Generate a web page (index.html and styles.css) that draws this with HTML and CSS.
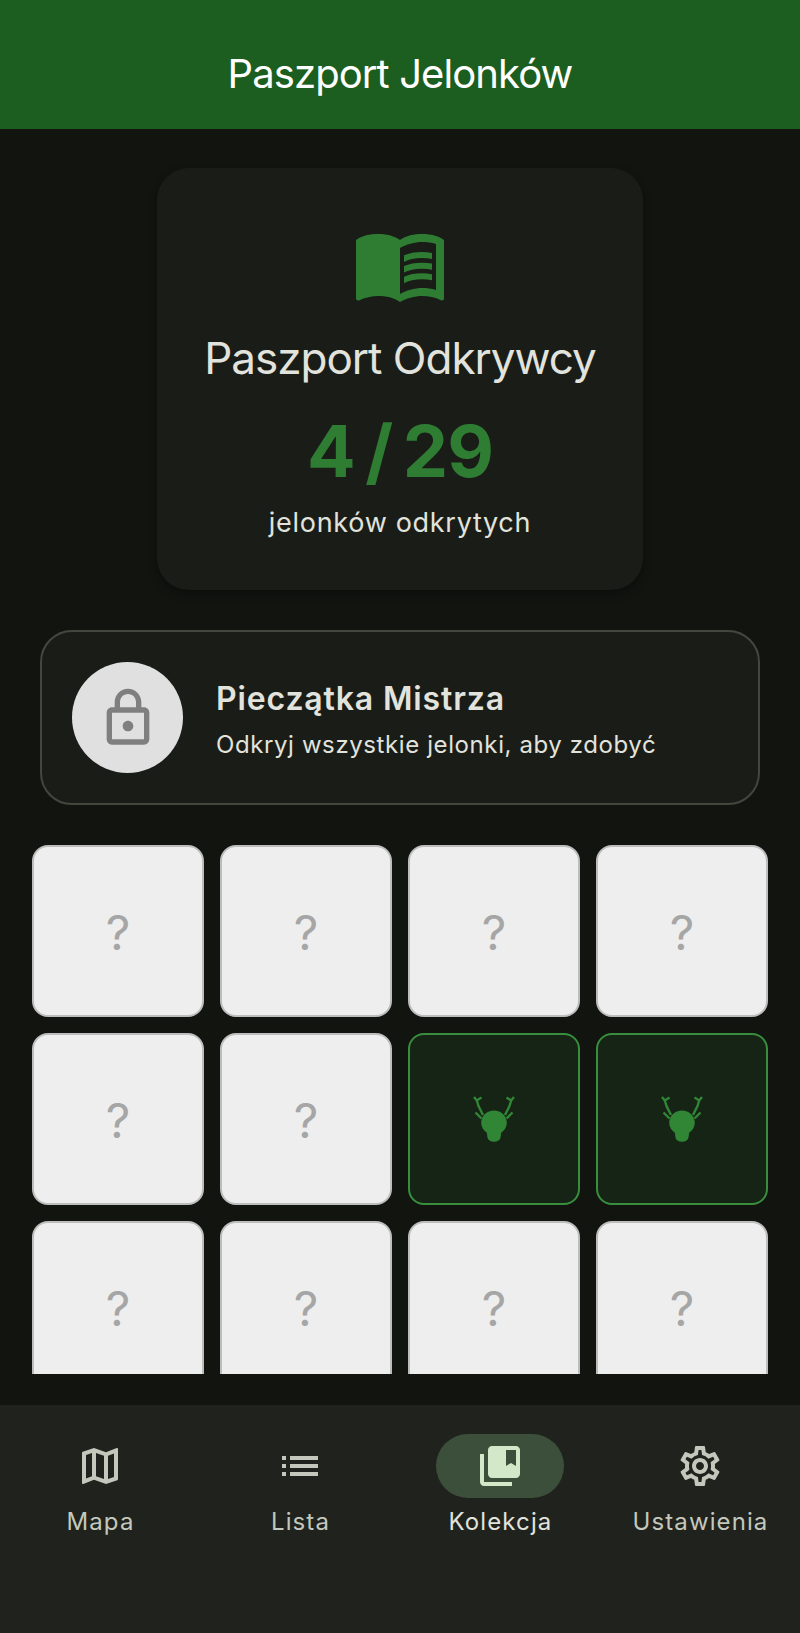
FILE: index.html
```html
<!DOCTYPE html>
<html lang="pl">

<head>
  <meta charset="UTF-8" />
  <title>Paszport Jelonków</title>
  <link rel="stylesheet" href="styles.css">
</head>

<body>
  <svg class="sprite" width="0" height="0">
    <symbol id="deer" viewBox="0 0 48 48">
      <path class="deer-head" d="M24 15.500c7 0 12.800 5.400 12.800 12.200 0 4.300-2.300 7.600-5.500 9.800l-.9 5.500c-.5 2.300-3.300 3.700-6.400 3.700s-5.900-1.400-6.400-3.700l-.9-5.500c-3.200-2.200-5.500-5.500-5.500-9.800 0-6.800 5.800-12.200 12.800-12.200z" />
      <path class="deer-antler" d="M13 20 8.500 11 6.800 5.500M4 2l2.800 3.500L11.500 2.500M5.500 17.500l6 6M35 20l4.500-9 1.700-5.500M44 2l-2.800 3.500L36.500 2.500M42.500 17.500l-6 6" />
    </symbol>
  </svg>

  <header class="app-bar">Paszport Jelonków</header>

  <main class="content">
    <section class="passport-card">
      <svg class="passport-icon" viewBox="0 0 24 24">
        <path d="M21 5c-1.110-.35-2.330-.5-3.500-.5-1.950 0-4.050.4-5.500 1.500-1.450-1.100-3.550-1.500-5.500-1.500S2.450 4.900 1 6v14.650c0 .25.25.5.5.5.1 0 .15-.05.25-.05C3.100 20.450 5.050 20 6.500 20c1.950 0 4.050.4 5.500 1.500 1.350-.85 3.800-1.500 5.500-1.500 1.650 0 3.350.3 4.750 1.050.1.05.15.05.25.05.25 0 .5-.25.5-.5V6c-.6-.45-1.250-.75-2-1zm0 13.500c-1.100-.35-2.300-.5-3.500-.5-1.700 0-4.150.65-5.500 1.500V8c1.350-.85 3.800-1.500 5.500-1.500 1.200 0 2.400.15 3.500.5v11.500z" />
        <path d="M17.500 10.500c.88 0 1.730.09 2.500.26V9.240c-.79-.15-1.640-.24-2.500-.24-1.700 0-3.240.29-4.500.83v1.660c1.130-.64 2.700-.99 4.500-.99zM13 12.490v1.660c1.130-.64 2.700-.99 4.500-.99.88 0 1.730.09 2.500.26V11.900c-.79-.15-1.640-.24-2.500-.24-1.700 0-3.240.3-4.500.83zM17.500 14.330c-1.700 0-3.240.29-4.500.83v1.660c1.130-.64 2.700-.99 4.500-.99.88 0 1.730.09 2.500.26v-1.520c-.79-.16-1.640-.24-2.500-.24z" />
      </svg>
      <h2>Paszport Odkrywcy</h2>
      <div class="count">4 / 29</div>
      <p>jelonków odkrytych</p>
    </section>

    <section class="stamp-card">
      <div class="stamp-circle">
        <svg viewBox="0 0 24 24">
          <path d="M18 8h-1V6c0-2.760-2.240-5-5-5S7 3.240 7 6v2H6c-1.100 0-2 .9-2 2v10c0 1.100.9 2 2 2h12c1.100 0 2-.9 2-2V10c0-1.100-.9-2-2-2zM9 6c0-1.660 1.340-3 3-3s3 1.340 3 3v2H9V6zm9 14H6V10h12v10zm-6-3c1.100 0 2-.9 2-2s-.9-2-2-2-2 .9-2 2 .9 2 2 2z" />
        </svg>
      </div>
      <div>
        <h3>Pieczątka Mistrza</h3>
        <p>Odkryj wszystkie jelonki, aby zdobyć</p>
      </div>
    </section>

    <div class="grid-clip">
      <div class="deer-grid">
        <div class="cell">?</div>
        <div class="cell">?</div>
        <div class="cell">?</div>
        <div class="cell">?</div>
        <div class="cell">?</div>
        <div class="cell">?</div>
        <div class="cell found"><svg><use href="#deer" /></svg></div>
        <div class="cell found"><svg><use href="#deer" /></svg></div>
        <div class="cell">?</div>
        <div class="cell">?</div>
        <div class="cell">?</div>
        <div class="cell">?</div>
      </div>
    </div>
  </main>

  <nav class="bottom-nav">
    <div class="nav-item">
      <span class="nav-icon">
        <svg viewBox="0 0 24 24">
          <path d="M20.500 3l-.16.03L15 5.100 9 3 3.360 4.900c-.21.07-.36.25-.36.48V20.500c0 .28.22.5.5.5l.16-.03L9 18.900l6 2.100 5.640-1.900c.21-.07.36-.25.36-.48V3.500c0-.28-.22-.5-.5-.5zM10 5.470l4 1.400v11.660l-4-1.400V5.470zm-5 .99l3-1.010v11.700l-3 1.160V6.460zm14 11.080l-3 1.010V6.860l3-1.160v11.840z" />
        </svg>
      </span>
      <span class="nav-label">Mapa</span>
    </div>
    <div class="nav-item">
      <span class="nav-icon">
        <svg viewBox="0 0 24 24">
          <path d="M3 13h2v-2H3v2zm0 4h2v-2H3v2zm0-8h2V7H3v2zm4 4h14v-2H7v2zm0 4h14v-2H7v2zM7 7v2h14V7H7z" />
        </svg>
      </span>
      <span class="nav-label">Lista</span>
    </div>
    <div class="nav-item active">
      <span class="nav-icon">
        <svg viewBox="0 0 24 24">
          <path d="M4 6H2v14c0 1.100.9 2 2 2h14v-2H4V6z" />
          <path d="M20 2H8c-1.100 0-2 .9-2 2v12c0 1.100.9 2 2 2h12c1.100 0 2-.9 2-2V4c0-1.100-.9-2-2-2zm0 10l-2.500-1.500L15 12V4h5v8z" />
        </svg>
      </span>
      <span class="nav-label">Kolekcja</span>
    </div>
    <div class="nav-item">
      <span class="nav-icon">
        <svg viewBox="0 0 24 24">
          <path d="M19.430 12.980c.04-.32.07-.64.07-.98 0-.34-.03-.66-.07-.98l2.110-1.650c.19-.15.24-.42.12-.64l-2-3.460c-.09-.16-.26-.25-.44-.25-.06 0-.12.01-.17.03l-2.490 1c-.52-.4-1.080-.73-1.690-.98l-.38-2.650C14.460 2.180 14.250 2 14 2h-4c-.25 0-.46.18-.49.42l-.38 2.650c-.61.25-1.170.59-1.690.98l-2.490-1c-.06-.02-.12-.03-.18-.03-.17 0-.34.09-.43.25l-2 3.460c-.13.22-.07.49.12.64l2.110 1.650c-.04.32-.07.65-.07.98 0 .33.03.66.07.98l-2.110 1.650c-.19.15-.24.42-.12.64l2 3.460c.09.16.26.25.44.25.06 0 .12-.01.17-.03l2.490-1c.52.4 1.080.73 1.690.98l.38 2.650c.03.24.24.42.49.42h4c.25 0 .46-.18.49-.42l.38-2.650c.61-.25 1.170-.59 1.690-.98l2.490 1c.06.02.12.03.18.03.17 0 .34-.09.43-.25l2-3.460c.12-.22.07-.49-.12-.64l-2.110-1.650zm-1.980-1.710c.04.31.05.52.05.73 0 .21-.02.43-.05.73l-.14 1.130.89.7 1.080.84-.7 1.210-1.270-.51-1.040-.42-.9.68c-.43.32-.84.56-1.250.73l-1.060.43-.16 1.130-.2 1.350h-1.400l-.19-1.350-.16-1.130-1.060-.43c-.43-.18-.83-.41-1.230-.71l-.91-.7-1.060.43-1.270.51-.7-1.210 1.080-.84.89-.7-.14-1.130c-.03-.31-.05-.54-.05-.74s.02-.43.05-.73l.14-1.130-.89-.7-1.080-.84.7-1.210 1.270.51 1.040.42.9-.68c.43-.32.84-.56 1.250-.73l1.060-.43.16-1.130.2-1.350h1.390l.19 1.350.16 1.130 1.060.43c.43.18.83.41 1.230.71l.91.7 1.060-.43 1.270-.51.7 1.210-1.070.85-.89.7.14 1.130zM12 8c-2.210 0-4 1.790-4 4s1.790 4 4 4 4-1.790 4-4-1.790-4-4-4zm0 6c-1.100 0-2-.9-2-2s.9-2 2-2 2 .9 2 2-.9 2-2 2z" />
        </svg>
      </span>
      <span class="nav-label">Ustawienia</span>
    </div>
  </nav>
</body>

</html>
```

FILE: styles.css
```css
/* --- BASE --- */
* {
  margin: 0;
  padding: 0;
  box-sizing: border-box;
  font-family: Inter, "Noto Sans", sans-serif;
}

body {
  display: flex;
  flex-direction: column;
  height: 100vh;
  background: #11140f;
  color: #e2e3dd;
  overflow: hidden;
}

.sprite {
  position: absolute;
}

/* --- APP BAR --- */
.app-bar {
  display: flex;
  align-items: center;
  justify-content: center;
  flex: 0 0 129px;
  padding-top: 18px;
  background: #1b5e20;
  color: #fff;
  font-size: 40px;
  letter-spacing: -0.9px;
}

/* --- CONTENT --- */
.content {
  display: flex;
  flex-direction: column;
  align-items: center;
  flex: 1;
  min-height: 0;
  padding-top: 39px;
}

.passport-card {
  display: flex;
  flex-direction: column;
  align-items: center;
  flex: 0 0 auto;
  width: 486px;
  height: 422px;
  padding-top: 48px;
  background: #1a1c18;
  border-radius: 32px;
  box-shadow: 0 4px 10px rgba(0, 0, 0, 0.3);
}

.passport-icon {
  width: 96px;
  height: 96px;
  fill: #2e7d32;
}

.passport-card h2 {
  margin-top: 18px;
  font-size: 44px;
  line-height: 56px;
  font-weight: 400;
  letter-spacing: -1px;
}

.passport-card .count {
  margin-top: 22px;
  font-size: 72px;
  line-height: 86px;
  font-weight: 700;
  letter-spacing: -1px;
  word-spacing: -5.5px;
  color: #2e7d32;
}

.passport-card p {
  margin-top: 9px;
  font-size: 27px;
  line-height: 40px;
  letter-spacing: 0.7px;
}

/* --- STAMP --- */
.stamp-card {
  display: flex;
  align-items: center;
  gap: 33px;
  flex: 0 0 auto;
  width: 720px;
  margin-top: 40px;
  padding: 30px;
  background: #1a1c18;
  border: 2px solid #43483f;
  border-radius: 32px;
}

.stamp-circle {
  display: flex;
  align-items: center;
  justify-content: center;
  width: 111px;
  height: 111px;
  background: #e0e0e0;
  border-radius: 50%;
}

.stamp-circle svg {
  width: 64px;
  height: 64px;
  fill: #7f7f7f;
}

.stamp-card h3 {
  font-size: 32px;
  line-height: 48px;
  font-weight: 600;
  letter-spacing: 0.85px;
}

.stamp-card p {
  margin-top: 6px;
  font-size: 24px;
  line-height: 32px;
  letter-spacing: 0.6px;
}

/* --- GRID --- */
.grid-clip {
  flex: 1;
  min-height: 0;
  align-self: stretch;
  margin: 40px 0 31px;
  overflow: hidden;
}

.deer-grid {
  display: grid;
  grid-template-columns: repeat(4, 1fr);
  gap: 16px;
  padding: 0 32px;
}

.cell {
  display: flex;
  align-items: center;
  justify-content: center;
  aspect-ratio: 1;
  padding-top: 3px;
  background: #eeeeee;
  border: 2px solid #bdbdbd;
  border-radius: 16px;
  color: #a6a6a6;
  font-size: 48px;
}

.cell.found {
  padding-top: 0;
  background: #152415;
  border-color: #388e3c;
}

.cell svg {
  width: 48px;
  height: 48px;
}

.deer-head {
  fill: #318636;
}

.deer-antler {
  fill: none;
  stroke: #318636;
  stroke-width: 2.4;
}

/* --- NAV --- */
.bottom-nav {
  display: grid;
  grid-template-columns: repeat(4, 1fr);
  flex: 0 0 228px;
  padding-top: 29px;
  background: #1f221d;
}

.nav-item {
  display: flex;
  flex-direction: column;
  align-items: center;
  color: #c4c8bc;
}

.nav-icon {
  display: flex;
  align-items: center;
  justify-content: center;
  width: 128px;
  height: 64px;
  border-radius: 32px;
}

.nav-icon svg {
  width: 48px;
  height: 48px;
  fill: currentColor;
}

.nav-label {
  margin-top: 8px;
  padding-left: 1px;
  font-size: 24px;
  line-height: 32px;
  letter-spacing: 1.1px;
}

.nav-item.active {
  color: #e2e3dd;
}

.nav-item.active .nav-icon {
  background: #3c4f3a;
  color: #d2e8c9;
}
```
